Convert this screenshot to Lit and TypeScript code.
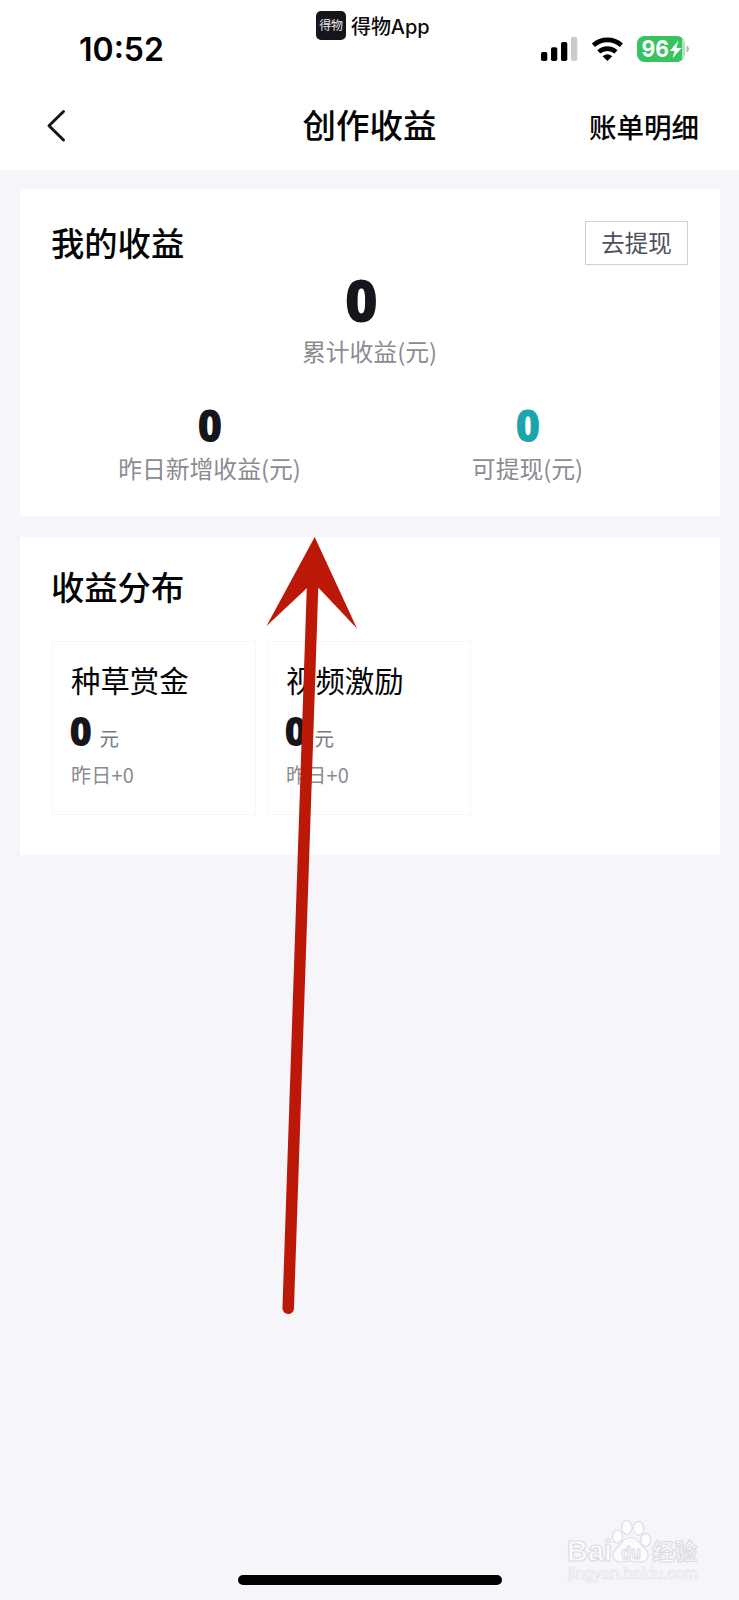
import { LitElement, html, css } from "lit";
import { customElement, property } from "lit/decorators.js";

@customElement("status-bar")
class StatusBar extends LitElement {
  static styles = css`
    :host { display: block; height: 82px; }
    .row { display: grid; grid-template-columns: 316px 1fr 198px; align-items: start; height: 82px; }
    .time { padding: 31px 0 0 79px; font: 600 32px/38px Inter, sans-serif; letter-spacing: 0; color: #000; }
    .app { display: flex; gap: 5px; padding-top: 11px; }
    .logo { width: 30px; height: 29px; border-radius: 5px; background: #15151c; color: #e9e9ee; text-align: center;
      font: 400 12px/28px "Noto Sans CJK SC", sans-serif; letter-spacing: -0.3px; }
    .name { font: 500 20px/29px Inter, "Noto Sans CJK SC", sans-serif; color: #0b0b0d; letter-spacing: -0.1px; white-space: nowrap; padding-top: 2px; }
    .icons { padding-top: 34px; }
    .icons svg { display: block; }
  `;
  render() {
    return html`<div class="row">
      <div class="time">10:52</div>
      <div class="app"><span class="logo">得物</span><span class="name">得物App</span></div>
      <div class="icons">
        <svg width="160" height="32" viewBox="541 34 160 32">
          <rect x="541" y="52" width="6.3" height="9" rx="1.8" />
          <rect x="551" y="47.2" width="6.3" height="13.8" rx="1.8" />
          <rect x="561" y="42" width="6.3" height="19" rx="1.8" />
          <rect x="571" y="37" width="6.3" height="24" rx="1.8" fill="#cbcbcd" />
          <g fill="none" stroke="#000" stroke-width="4.6">
            <path d="M593.4 45.2a21 21 0 0 1 28 0" />
            <path d="M598.8 51.9a13 13 0 0 1 17.2 0" />
          </g>
          <path d="M602.6 56.300a7.600 7.600 0 0 1 9.600 0L607.400 61z" />
          <rect x="637" y="36" width="47.500" height="26" rx="7.500" fill="#37c35d" />
          <path d="M682 37.500a7 7 0 0 1 2.500 5v13a7 7 0 0 1-2.500 5z" fill="#b3e5bf" />
          <path d="M686.600 45.200q2.400 1.400 2.400 3.800t-2.400 3.800z" fill="#b5b5b8" />
          <text x="641.600" y="57.200" font-family="Inter, sans-serif" font-weight="700" font-size="22.500" textLength="27.500" lengthAdjust="spacingAndGlyphs" fill="#fff">96</text>
          <path d="M678.500 40.500L669.800 51h4.700l-2 7.500L681.500 48h-5z" fill="#fff" />
        </svg>
      </div>
    </div>`;
  }
}

@customElement("nav-bar")
class NavBar extends LitElement {
  static styles = css`
    :host { display: block; }
    .row { display: grid; grid-template-columns: 1fr auto 1fr; height: 88px; padding: 0 40px 0 46px; box-sizing: border-box; color: #050505; }
    .back { padding-top: 27px; }
    .back svg { display: block; }
    .title { font-size: 33.500px; line-height: 44px; font-weight: 500; padding-top: 20px; margin-right: 6px; }
    .link { font-size: 27.500px; line-height: 40px; font-weight: 500; padding-top: 24px; text-align: right; }
  `;
  render() {
    return html`<div class="row">
      <div class="back"><svg width="20" height="34" viewBox="0 0 20 34" fill="none" stroke="#15151a" stroke-width="3" stroke-linecap="round" stroke-linejoin="round"><path d="M17.500 2.500L3 16.800L17.500 31" /></svg></div>
      <div class="title">创作收益</div>
      <div class="link">账单明细</div>
    </div>`;
  }
}

@customElement("stat-number")
class StatNumber extends LitElement {
  static styles = css`
    :host { display: inline-block; font-family: "Open Sans", sans-serif; font-weight: 800; color: #15151b; }
    .digits { display: inline-block; transform: scaleX(0.96); }
  `;
  @property() value = "0";
  render() {
    return html`<span class="digits">${this.value}</span>`;
  }
}

@customElement("app-root")
class AppRoot extends LitElement {
  static styles = css`
    :host { display: block; position: relative; width: 739px; height: 1600px; overflow: hidden; background: #f5f5fa;
      font-family: "Noto Sans CJK SC", sans-serif; color: #050505; }
    .top { background: #fff; height: 170px; }
    .cards { display: flex; flex-direction: column; gap: 21px; padding: 19px 19px 0 20px; }
    .card { background: #fff; box-sizing: border-box; }
    .earn { height: 327px; padding: 32px 32px 0 31px; }
    .dist { height: 318px; padding: 27px 31px 0; }
    .head { display: flex; justify-content: space-between; height: 44px; }
    .h { font-size: 33.300px; line-height: 44px; font-weight: 500; }
    .head .h { margin-top: -1px; }
    .btn { box-sizing: border-box; width: 103px; height: 44px; border: 1px solid #cfcfd6; font-size: 23.500px; line-height: 40px; text-align: center; color: #50505c; }
    .lab { font-size: 23.800px; line-height: 32px; color: #8b8b93; }
    .total { text-align: center; padding-top: 5px; }
    .total .lab { margin-top: 5px; }
    .total stat-number { display: block; font-size: 59px; line-height: 59px; height: 60px; margin-right: 17px; }
    .pair { display: grid; grid-template-columns: 317px 319px; padding-top: 36px; text-align: center; }
    .pair stat-number { display: block; font-size: 44px; line-height: 44px; height: 49px; }
    .pair .teal { color: #1ca4ac; }
    .tiles { display: flex; gap: 11px; margin: 33px 0 0 1px; }
    .tile { box-sizing: border-box; width: 204px; height: 174px; border: 1px solid #f6f6f9; padding: 17px 18px 0; }
    .t { font-size: 29.400px; line-height: 40px; }
    .amount { display: flex; height: 50px; padding-top: 12px; box-sizing: border-box; }
    .amount stat-number { font-size: 40px; line-height: 40px; margin-left: -2px; }
    .unit { font-size: 19.500px; line-height: 26px; color: #77777f; margin: 14px 0 0 7px; }
    .day { font-size: 20px; line-height: 28px; color: #8b8b93; margin-top: 12px; letter-spacing: 0.2px; }
    .arrow { position: absolute; left: 0; top: 0; pointer-events: none; }
    .mark { position: absolute; left: 560px; top: 1510px; }
    .home { position: absolute; left: 238px; top: 1575px; width: 264px; height: 10px; border-radius: 5px; background: #000; }
  `;
  tiles = ["种草赏金", "视频激励"];
  render() {
    return html`
      <div class="top"><status-bar></status-bar><nav-bar></nav-bar></div>
      <div class="cards">
        <section class="card earn">
          <div class="head"><div class="h">我的收益</div><div class="btn">去提现</div></div>
          <div class="total"><stat-number></stat-number><div class="lab">累计收益(元)</div></div>
          <div class="pair">
            <div><stat-number></stat-number><div class="lab">昨日新增收益(元)</div></div>
            <div><stat-number class="teal"></stat-number><div class="lab">可提现(元)</div></div>
          </div>
        </section>
        <section class="card dist">
          <div class="h">收益分布</div>
          <div class="tiles">
            ${this.tiles.map((t) => html`<div class="tile">
              <div class="t">${t}</div>
              <div class="amount"><stat-number></stat-number><span class="unit">元</span></div>
              <div class="day">昨日+0</div>
            </div>`)}
          </div>
        </section>
      </div>
      <svg class="arrow" width="739" height="1600" viewBox="0 0 739 1600">
        <path d="M312.800 580L288.200 1308.300" stroke="#bb1808" stroke-width="11.500" stroke-linecap="round" />
        <path d="M314.700 537L357 628.500L318.700 588H307L266.500 626Z" fill="#bb1808" />
      </svg>
      <svg class="mark" width="150" height="80" viewBox="560 1510 150 80" fill="#fcfcfe" stroke="#dddde3" stroke-width="1.200">
        <text x="567" y="1561" font-family="Liberation Sans, sans-serif" font-weight="700" font-size="29" textLength="45" lengthAdjust="spacingAndGlyphs">Bai</text>
        <ellipse cx="617.500" cy="1536.500" rx="5" ry="6.500" />
        <ellipse cx="626.800" cy="1527.500" rx="5.200" ry="7" />
        <ellipse cx="638.500" cy="1528.300" rx="5.200" ry="7" />
        <ellipse cx="645.800" cy="1539.800" rx="5" ry="6.500" />
        <path d="M630.500 1537.500c5 0 8 3.500 10 6.500c3 4 7.500 6 7.500 11c0 5-4 7.300-8 7c-4-.4-6-1-9.500-1s-5.500.8-9.500 1c-4.500.2-8-2.500-8-7c0-5 5-7 7.500-11c2.300-3.500 5-6.500 10-6.500z" />
        <text x="621" y="1558.500" font-family="Liberation Sans, sans-serif" font-weight="700" font-size="19" textLength="20" lengthAdjust="spacingAndGlyphs">du</text>
        <text x="652" y="1560" font-family="Noto Sans CJK SC, sans-serif" font-weight="700" font-size="22.500">经验</text>
        <text x="568" y="1579" font-family="Liberation Sans, sans-serif" font-size="16.500" textLength="130" lengthAdjust="spacingAndGlyphs" stroke="#e4e4ea" stroke-width="0.700">jingyan.baidu.com</text>
      </svg>
      <div class="home"></div>
    `;
  }
}
